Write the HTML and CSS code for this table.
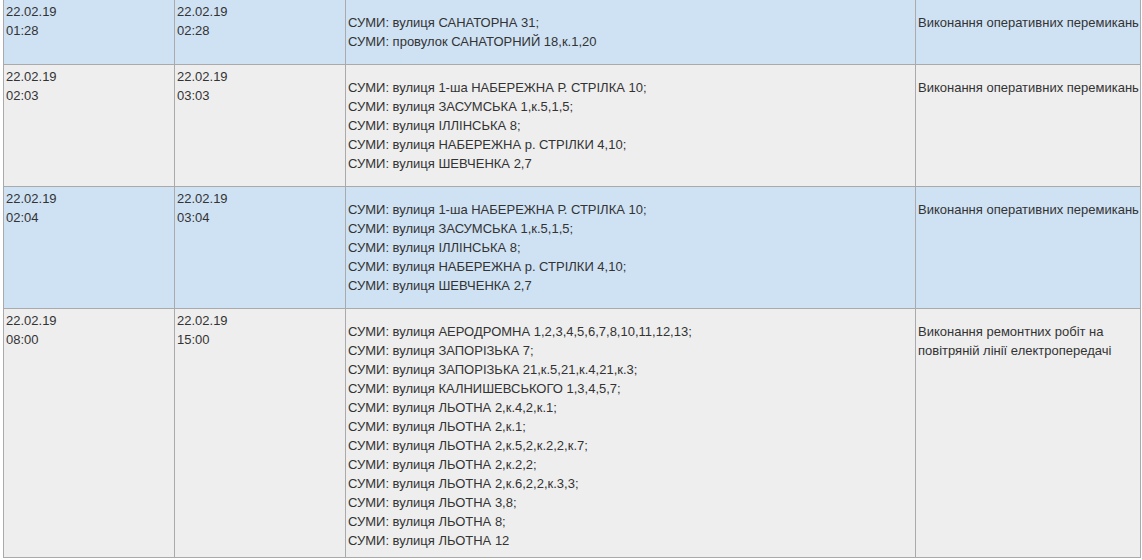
FILE: index.html
```html
<!DOCTYPE html>
<html lang="uk">
<head>
  <meta charset="UTF-8">
  <title>Відключення електроенергії - Суми</title>
  <link rel="stylesheet" href="styles.css">
</head>
<body>
<table class="grafik">
  <colgroup>
    <col class="c-start">
    <col class="c-end">
    <col class="c-addr">
    <col class="c-reason">
  </colgroup>
  <tr class="blue">
    <td>22.02.19<br>01:28</td>
    <td>22.02.19<br>02:28</td>
    <td class="addr">
      СУМИ: вулиця САНАТОРНА 31;<br>
      СУМИ: провулок САНАТОРНИЙ 18,к.1,20
    </td>
    <td class="reason">Виконання оперативних перемикань</td>
  </tr>
  <tr class="grey">
    <td>22.02.19<br>02:03</td>
    <td>22.02.19<br>03:03</td>
    <td class="addr">
      СУМИ: вулиця 1-ша НАБЕРЕЖНА Р. СТРІЛКА 10;<br>
      СУМИ: вулиця ЗАСУМСЬКА 1,к.5,1,5;<br>
      СУМИ: вулиця ІЛЛІНСЬКА 8;<br>
      СУМИ: вулиця НАБЕРЕЖНА р. СТРІЛКИ 4,10;<br>
      СУМИ: вулиця ШЕВЧЕНКА 2,7
    </td>
    <td class="reason">Виконання оперативних перемикань</td>
  </tr>
  <tr class="blue">
    <td>22.02.19<br>02:04</td>
    <td>22.02.19<br>03:04</td>
    <td class="addr">
      СУМИ: вулиця 1-ша НАБЕРЕЖНА Р. СТРІЛКА 10;<br>
      СУМИ: вулиця ЗАСУМСЬКА 1,к.5,1,5;<br>
      СУМИ: вулиця ІЛЛІНСЬКА 8;<br>
      СУМИ: вулиця НАБЕРЕЖНА р. СТРІЛКИ 4,10;<br>
      СУМИ: вулиця ШЕВЧЕНКА 2,7
    </td>
    <td class="reason">Виконання оперативних перемикань</td>
  </tr>
  <tr class="grey last">
    <td>22.02.19<br>08:00</td>
    <td>22.02.19<br>15:00</td>
    <td class="addr">
      СУМИ: вулиця АЕРОДРОМНА 1,2,3,4,5,6,7,8,10,11,12,13;<br>
      СУМИ: вулиця ЗАПОРІЗЬКА 7;<br>
      СУМИ: вулиця ЗАПОРІЗЬКА 21,к.5,21,к.4,21,к.3;<br>
      СУМИ: вулиця КАЛНИШЕВСЬКОГО 1,3,4,5,7;<br>
      СУМИ: вулиця ЛЬОТНА 2,к.4,2,к.1;<br>
      СУМИ: вулиця ЛЬОТНА 2,к.1;<br>
      СУМИ: вулиця ЛЬОТНА 2,к.5,2,к.2,2,к.7;<br>
      СУМИ: вулиця ЛЬОТНА 2,к.2,2;<br>
      СУМИ: вулиця ЛЬОТНА 2,к.6,2,2,к.3,3;<br>
      СУМИ: вулиця ЛЬОТНА 3,8;<br>
      СУМИ: вулиця ЛЬОТНА 8;<br>
      СУМИ: вулиця ЛЬОТНА 12
    </td>
    <td class="reason">Виконання ремонтних робіт на повітряній лінії електропередачі</td>
  </tr>
</table>
</body>
</html>
```

FILE: styles.css
```css
body { margin: 0; background: #fff; font-family: "Liberation Sans", Arial, sans-serif; font-size: 13px; line-height: 19px; color: #333; }
.grafik { border-collapse: collapse; table-layout: fixed; width: 1138px; margin: -1px 0 0 3px; }
.grafik td { border: 1px solid #aaa; padding: 2px; vertical-align: top; }
.c-start, .c-end { width: 171px; }
.c-addr { width: 570px; }
.grafik td.addr { padding: 13px 2px; }
.grafik td.reason { padding: 13px 0 13px 2px; }
.grafik tr.last td.addr, .grafik tr.last td.reason { padding-bottom: 7px; }
.blue td { background: #cfe2f4; }
.grey td { background: #eeeeee; }
```
